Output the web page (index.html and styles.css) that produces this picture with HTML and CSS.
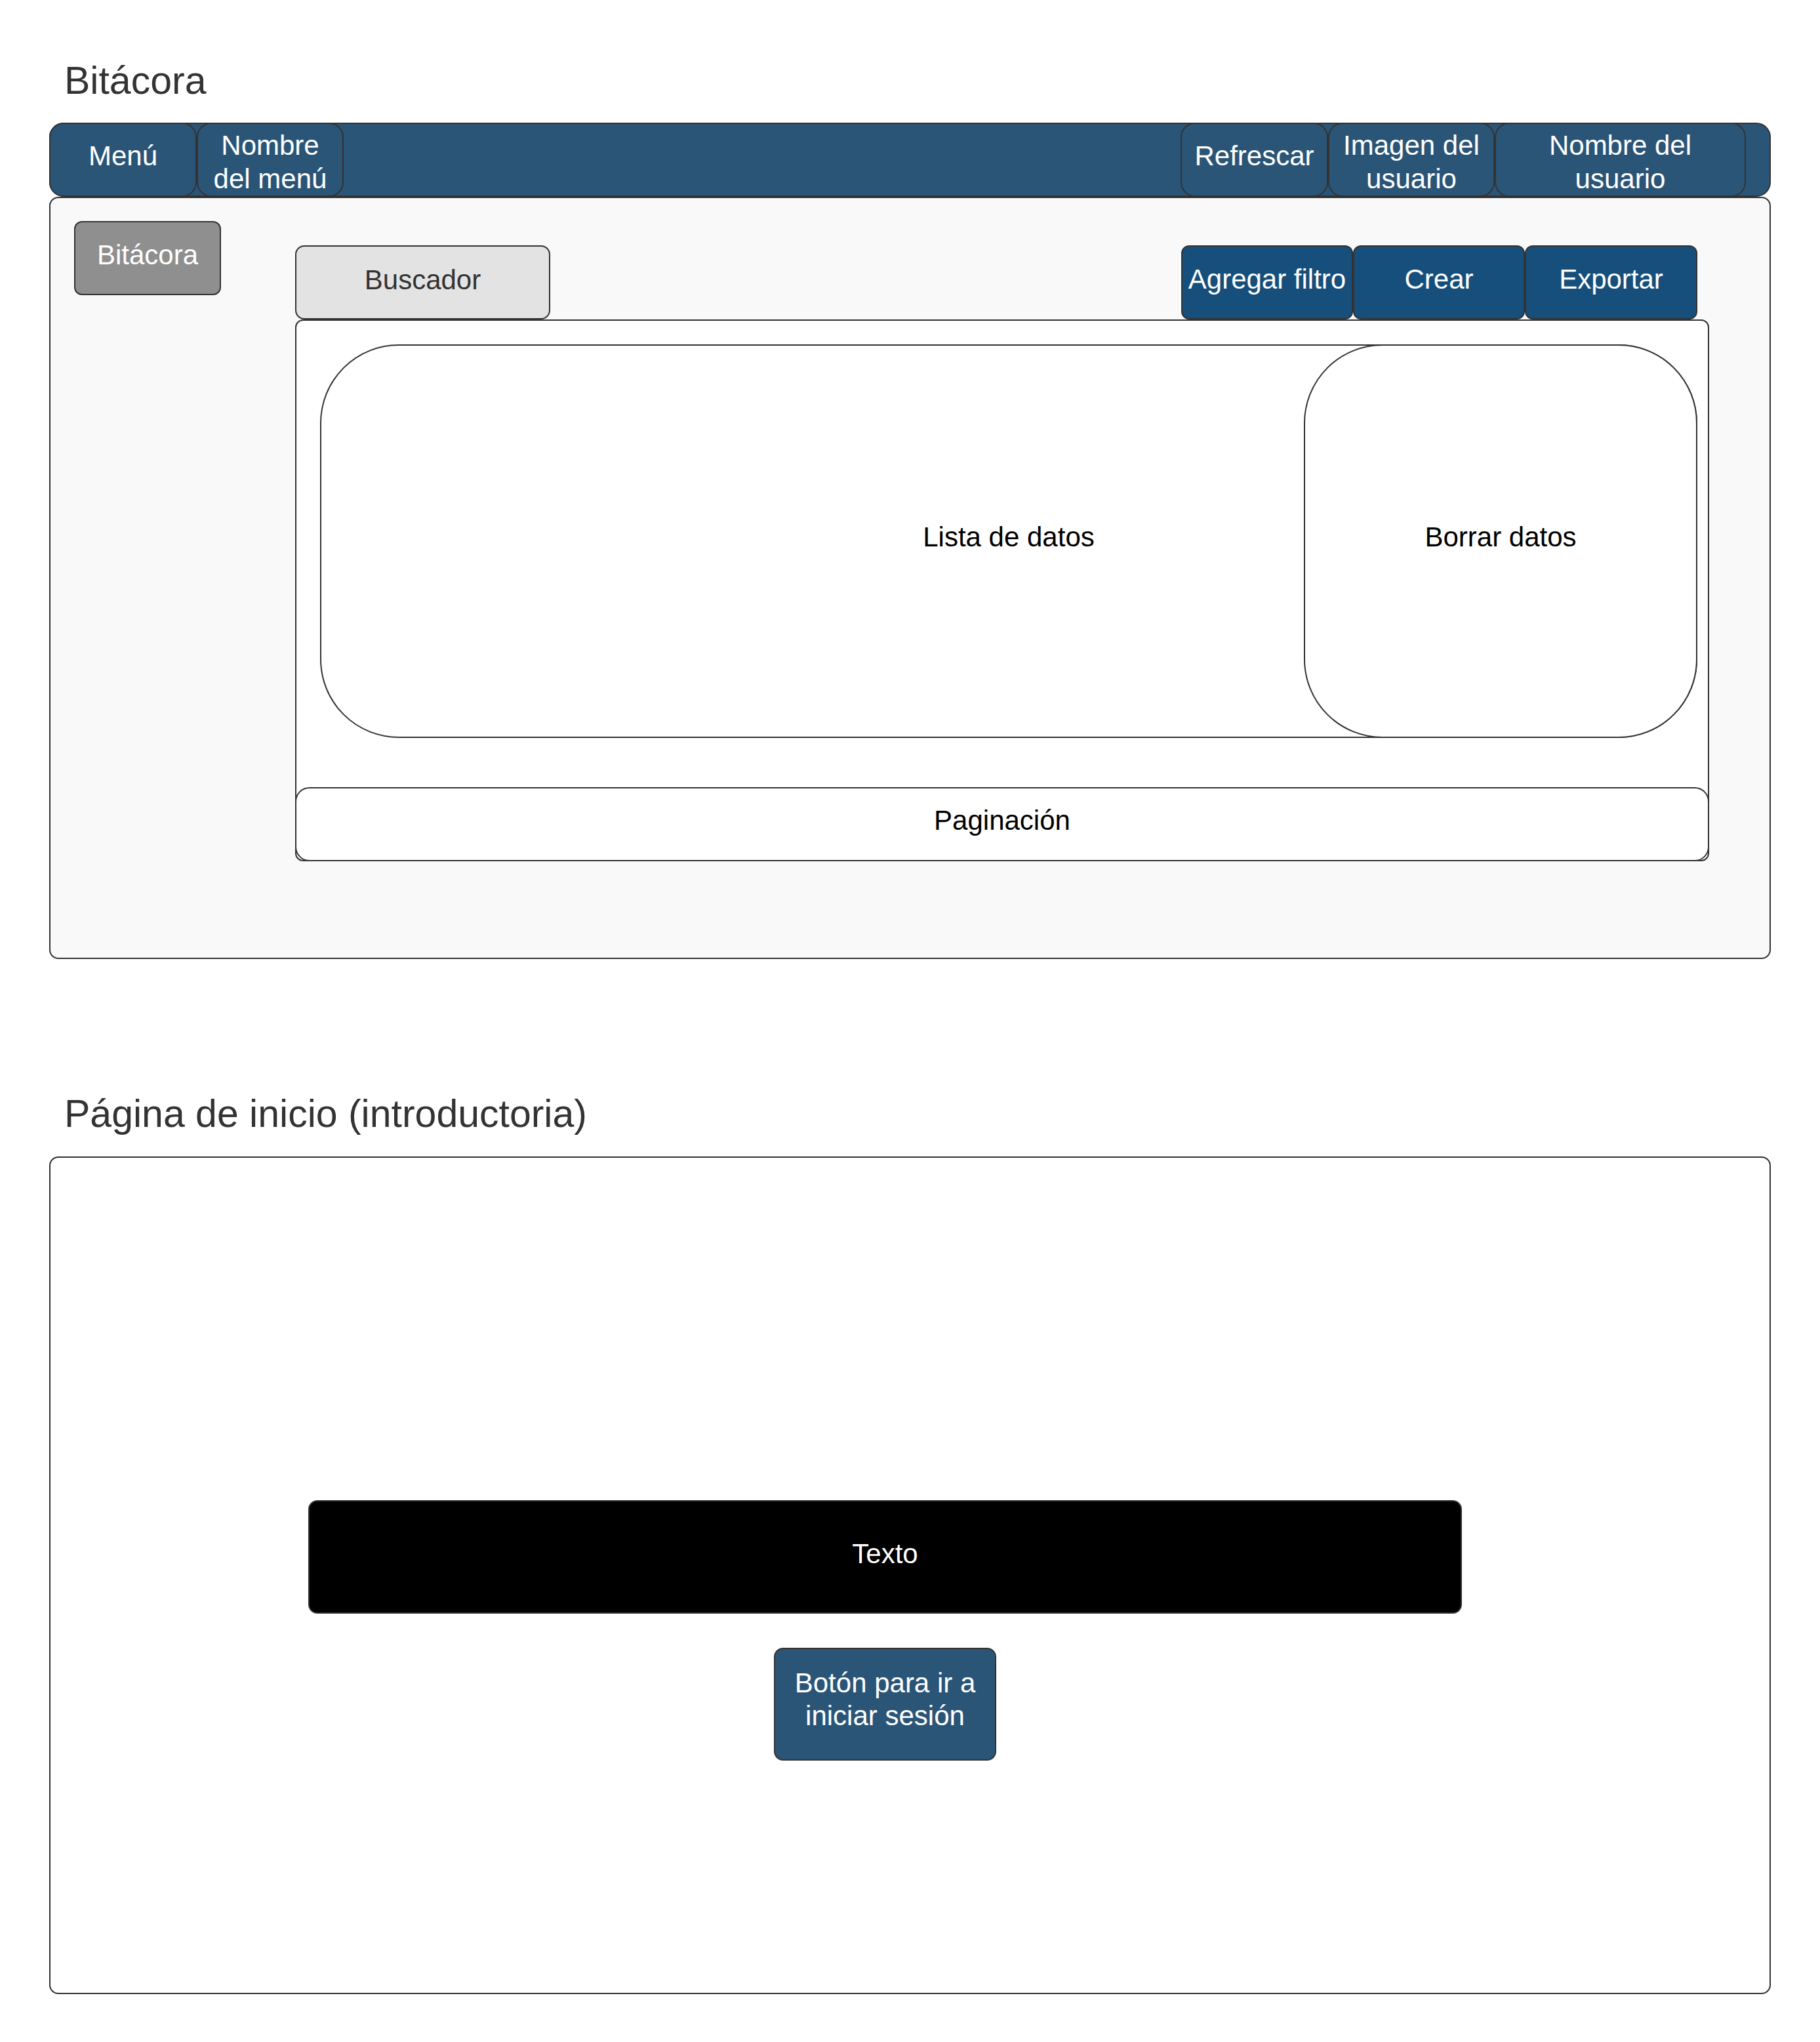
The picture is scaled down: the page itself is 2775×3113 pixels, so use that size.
FILE: index.html
```html
<!DOCTYPE html>
<html lang="es">
<head>
<meta charset="utf-8">
<title>Bitácora</title>
<link rel="stylesheet" href="styles.css">
</head>
<body>
<main class="page">
  <section class="screen screen-log">
    <h1 class="screen-title">Bitácora</h1>
    <header class="topbar">
      <div class="bar-cell cell-menu">Menú</div>
      <div class="bar-cell cell-stacked cell-menu-name">Nombre<br>del menú</div>
      <div class="bar-spacer"></div>
      <div class="bar-cell cell-refresh">Refrescar</div>
      <div class="bar-cell cell-stacked cell-avatar">Imagen del<br>usuario</div>
      <div class="bar-cell cell-stacked cell-user">Nombre del<br>usuario</div>
    </header>
    <div class="panel">
      <nav class="sidebar"><div class="side-item">Bitácora</div></nav>
      <div class="workspace">
        <div class="toolbar">
          <div class="search">Buscador</div>
          <div class="actions">
            <div class="action action-filter">Agregar filtro</div>
            <div class="action action-create">Crear</div>
            <div class="action action-export">Exportar</div>
          </div>
        </div>
        <div class="content">
          <div class="data-list">
            <span class="data-label">Lista de datos</span>
            <div class="data-delete">Borrar datos</div>
          </div>
          <div class="pagination">Paginación</div>
        </div>
      </div>
    </div>
  </section>
  <section class="screen screen-home">
    <h1 class="screen-title">Página de inicio (introductoria)</h1>
    <div class="home-panel">
      <div class="home-stack">
        <div class="home-text">Texto</div>
        <div class="home-button">Botón para ir a<br>iniciar sesión</div>
      </div>
    </div>
  </section>
</main>
</body>
</html>
```

FILE: styles.css
```css
* { box-sizing: border-box; }

html, body {
  margin: 0;
  background: #ffffff;
}

body {
  font-family: "Liberation Sans", Arial, sans-serif;
  font-size: 42px;
  line-height: 50px;
  color: #000;
}

.page {
  width: 2775px;
  padding: 94px 75px 60px;
}

.screen-title {
  margin: 0 0 35px 23px;
  height: 58px;
  font-size: 59px;
  line-height: 58px;
  font-weight: normal;
  color: #333333;
}

.screen-home { margin-top: 207px; }
.screen-home .screen-title { margin-bottom: 36px; }

/* ---------- top bar ---------- */
.topbar {
  display: flex;
  height: 113px;
  background: #2b5577;
  border: 2px solid #333333;
  border-radius: 22px;
  color: #ffffff;
}

.bar-cell {
  margin: -2px 0;
  padding-bottom: 11px;
  display: flex;
  align-items: center;
  justify-content: center;
  text-align: center;
  background: #2b5577;
  border: 2px solid #333333;
  border-radius: 22px;
}

.cell-stacked {
  padding: 7px 0 0;
  line-height: 51px;
}

.cell-menu { width: 225px; margin-left: -2px; }
.cell-menu-name { width: 224px; }
.bar-spacer { flex: 1; }
.cell-refresh { width: 225px; }
.cell-avatar { width: 254px; }
.cell-user { width: 383px; margin-right: 36px; }

/* ---------- main panel ---------- */
.panel {
  display: flex;
  align-items: flex-start;
  height: 1162px;
  padding: 35px 0 0 36px;
  background: #f9f9f9;
  border: 2px solid #333333;
  border-radius: 14px;
}

.side-item {
  width: 224px;
  height: 113px;
  padding-bottom: 9px;
  display: flex;
  align-items: center;
  justify-content: center;
  background: #8f8f8f;
  color: #ffffff;
  border: 2px solid #333333;
  border-radius: 12px;
}

.workspace {
  width: 2156px;
  margin: 37px 0 0 113px;
}

.toolbar {
  display: flex;
  height: 113px;
}

.search {
  width: 389px;
  padding-bottom: 7px;
  display: flex;
  align-items: center;
  justify-content: center;
  background: #e3e3e3;
  color: #333333;
  border: 2px solid #333333;
  border-radius: 14px;
}

.actions {
  display: flex;
  margin-left: auto;
  margin-right: 18px;
}

.action {
  width: 262px;
  padding-bottom: 9px;
  display: flex;
  align-items: center;
  justify-content: center;
  background: #164f7b;
  color: #ffffff;
  border: 2px solid #333333;
  border-radius: 12px;
  white-space: nowrap;
}

.action-export { width: 263px; }

.content {
  height: 826px;
  display: flex;
  flex-direction: column;
  background: #ffffff;
  border: 2px solid #333333;
  border-radius: 12px;
}

.data-list {
  display: grid;
  height: 600px;
  margin: 36px 16px 0 36px;
  border: 2px solid #333333;
  border-radius: 120px;
  background: #ffffff;
}

.data-label {
  grid-area: 1 / 1;
  place-self: center;
  margin-bottom: 13px;
}

.data-delete {
  grid-area: 1 / 1;
  justify-self: end;
  width: 600px;
  margin: -2px -2px -2px 0;
  padding-bottom: 13px;
  display: flex;
  align-items: center;
  justify-content: center;
  background: #ffffff;
  border: 2px solid #333333;
  border-radius: 120px;
}

.pagination {
  height: 113px;
  margin: auto -2px -2px;
  padding-bottom: 12px;
  display: flex;
  align-items: center;
  justify-content: center;
  background: #ffffff;
  border: 2px solid #333333;
  border-radius: 22px;
}

/* ---------- home page ---------- */
.home-panel {
  height: 1277px;
  padding: 522px 0 0 393px;
  background: #ffffff;
  border: 2px solid #333333;
  border-radius: 14px;
}

.home-stack {
  width: 1759px;
  display: flex;
  flex-direction: column;
  align-items: center;
}

.home-text {
  width: 100%;
  height: 173px;
  padding-bottom: 9px;
  display: flex;
  align-items: center;
  justify-content: center;
  background: #000000;
  color: #ffffff;
  border: 2px solid #333333;
  border-radius: 14px;
}

.home-button {
  width: 339px;
  height: 172px;
  margin-top: 52px;
  padding-bottom: 14px;
  display: flex;
  align-items: center;
  justify-content: center;
  text-align: center;
  background: #2b5577;
  color: #ffffff;
  border: 2px solid #333333;
  border-radius: 14px;
}
```
